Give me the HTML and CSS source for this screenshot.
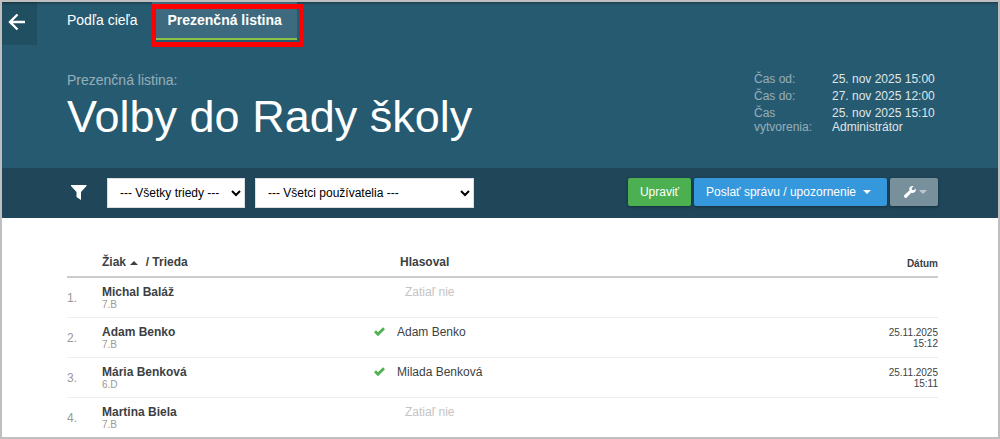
FILE: index.html
```html
<!DOCTYPE html>
<html lang="sk">
<head>
    <meta charset="utf-8">
    <meta name="viewport" content="width=device-width, initial-scale=1">
    <title>Prezenčná listina</title>
    <link rel="stylesheet" href="styles.css">
</head>
<body>
    <div class="page">
        <header class="header">
            <nav class="tabs">
                <a class="back" href="#" aria-label="Späť">
                    <svg width="18" height="18" viewBox="0 0 18 18"><path d="M9.500 1.500L2 9l7.500 7.500M2 9h15" fill="none" stroke="#fff" stroke-width="2.400"/></svg>
                </a>
                <a class="tab" href="#">Podľa cieľa</a>
                <a class="tab active" href="#">Prezenčná listina</a>
            </nav>
            <div class="heading">
                <div>
                    <p class="subtitle">Prezenčná listina:</p>
                    <h1>Volby do Rady školy</h1>
                </div>
                <dl class="info">
                    <dt>Čas od:</dt>
                    <dd>25. nov 2025 15:00</dd>
                    <dt>Čas do:</dt>
                    <dd>27. nov 2025 12:00</dd>
                    <dt>Čas vytvorenia:</dt>
                    <dd>25. nov 2025 15:10<br>Administrátor</dd>
                </dl>
            </div>
        </header>

        <div class="toolbar">
            <svg class="filter" width="18" height="16" viewBox="0 0 18 16"><path d="M0 0h15.500v1L10 7v8L5.500 12V7L0 1z" fill="#fff"/></svg>
            <select class="select-class" aria-label="Trieda">
                <option>--- Všetky triedy ---</option>
            </select>
            <select class="select-user" aria-label="Používateľ">
                <option>--- Všetci používatelia ---</option>
            </select>
            <div class="buttons">
                <button type="button" class="btn green">Upraviť</button>
                <button type="button" class="btn blue">Poslať správu / upozornenie <span class="caret"></span></button>
                <button type="button" class="btn grey" aria-label="Nástroje">
                    <svg width="12" height="12" viewBox="0 0 12 12"><path d="M11.800 2.600L9.900 4.200 8 3.700 7.700 2 9.600.3C7.600-.4 5.300.9 5.200 3.300c0 .4 0 .8.200 1.200L.5 8.900c-.7.700-.7 1.700-.1 2.400.7.800 1.700.8 2.400.1L7.200 6.800c2.700.900 5.200-1.400 4.600-4.200z" fill="#fff"/></svg>
                    <span class="caret"></span>
                </button>
            </div>
        </div>

        <main class="content">
            <table>
                <thead>
                    <tr>
                        <th class="num"></th>
                        <th class="student">Žiak <span class="sort"></span> / Trieda</th>
                        <th class="check"></th>
                        <th class="voted">Hlasoval</th>
                        <th class="date">Dátum</th>
                    </tr>
                </thead>
                <tbody>
                    <tr>
                        <td class="num">1.</td>
                        <td class="student"><b>Michal Baláž</b><small>7.B</small></td>
                        <td class="check"></td>
                        <td class="voted none">Zatiaľ nie</td>
                        <td class="date"></td>
                    </tr>
                    <tr>
                        <td class="num">2.</td>
                        <td class="student"><b>Adam Benko</b><small>7.B</small></td>
                        <td class="check"><svg width="11" height="9" viewBox="0 0 11 9"><path d="M1 4.200l3 3L10 1.200" fill="none" stroke="#4caf50" stroke-width="2.800"/></svg></td>
                        <td class="voted">Adam Benko</td>
                        <td class="date">25.11.2025<br>15:12</td>
                    </tr>
                    <tr>
                        <td class="num">3.</td>
                        <td class="student"><b>Mária Benková</b><small>6.D</small></td>
                        <td class="check"><svg width="11" height="9" viewBox="0 0 11 9"><path d="M1 4.200l3 3L10 1.200" fill="none" stroke="#4caf50" stroke-width="2.800"/></svg></td>
                        <td class="voted">Milada Benková</td>
                        <td class="date">25.11.2025<br>15:11</td>
                    </tr>
                    <tr>
                        <td class="num">4.</td>
                        <td class="student"><b>Martina Biela</b><small>7.B</small></td>
                        <td class="check"></td>
                        <td class="voted none">Zatiaľ nie</td>
                        <td class="date"></td>
                    </tr>
                </tbody>
            </table>
        </main>
    </div>
</body>
</html>
```

FILE: styles.css
```css
* {
    box-sizing: border-box;
}

body {
    margin: 0;
    font-family: "Liberation Sans", Arial, sans-serif;
    font-size: 12px;
    color: #3c3f44;
}

.page {
    min-height: 100vh;
    border: 2px solid #bfbfbf;
    background: #fff;
}

.header {
    background: #265a70;
    box-shadow: inset 0 3px 3px -2px rgba(0, 0, 0, 0.4);
    padding-bottom: 26px;
}

.tabs {
    display: flex;
    align-items: flex-start;
}

.back {
    display: flex;
    width: 35px;
    height: 43px;
    padding: 11px 0 0 6px;
    margin-right: 15px;
    background: rgba(0, 0, 0, 0.12);
}

.tab {
    position: relative;
    height: 38px;
    padding: 10px 15px 0;
    font-size: 14px;
    line-height: 16px;
    color: #fff;
    text-decoration: none;
}

.tab.active {
    font-weight: bold;
    background: #3d6a7e;
    border-bottom: 2px solid #8bc34a;
}

/* highlight frame around the current tab */
.tab.active::after {
    content: "";
    position: absolute;
    top: 2px;
    right: -7px;
    bottom: -9px;
    left: -1px;
    border: 5px solid #f00;
    border-radius: 2px;
}

.heading {
    display: flex;
    justify-content: space-between;
    align-items: flex-start;
    padding: 27px 60px 0 65px;
}

.subtitle {
    margin: 0;
    font-size: 14px;
    line-height: 16px;
    color: #fff;
    opacity: 0.5;
}

h1 {
    margin: 4px 0 0;
    font-size: 45px;
    font-weight: normal;
    line-height: 50px;
    color: #fff;
}

.info {
    display: grid;
    grid-template-columns: 78px 106px;
    row-gap: 3px;
    margin: 0;
    line-height: 14px;
    color: #fff;
}

.info dt {
    padding-right: 12px;
    opacity: 0.5;
}

.info dd {
    margin: 0;
    opacity: 0.85;
}

.toolbar {
    display: flex;
    align-items: center;
    height: 50px;
    padding: 0 60px 0 69px;
    background: #1f4659;
}

.filter {
    margin-right: 18px;
}

select {
    height: 30px;
    margin-right: 10px;
    padding: 0 0 0 8px;
    border: 1px solid #ddd;
    background: #fff;
    color: #000;
    font: inherit;
}

.select-class {
    width: 138px;
}

.select-user {
    width: 219px;
}

.buttons {
    display: flex;
    gap: 3px;
    margin: 0 0 2px auto;
}

.btn {
    display: flex;
    align-items: center;
    height: 28px;
    padding: 0 12px;
    border: 0;
    border-radius: 2px;
    box-shadow: 0 1px 3px rgba(0, 0, 0, 0.3);
    font: inherit;
    color: #fff;
}

.green {
    background: #4caf50;
}

.blue {
    padding-right: 16px;
    background: #3598dc;
}

.grey {
    padding: 0 11px 0 14px;
    background: #78909c;
}

.caret {
    margin-left: 7px;
    border: 4px solid transparent;
    border-top-color: currentColor;
    border-bottom: 0;
}

.grey .caret {
    margin-left: 3px;
    opacity: 0.5;
}

.content {
    padding: 28px 60px 0 65px;
}

table {
    width: 100%;
    border-collapse: separate;
    border-spacing: 0;
    table-layout: fixed;
}

th,
td {
    padding: 0;
    text-align: left;
    vertical-align: top;
    line-height: 14px;
}

th {
    height: 32px;
    padding-top: 9px;
    border-bottom: 2px solid #ccc;
}

td {
    height: 40px;
    padding-top: 7px;
    border-bottom: 1px solid #eee;
}

tr:last-child td {
    height: 39px;
    border-bottom: 0;
}

.num {
    width: 35px;
}

td.num {
    padding-top: 13px;
    color: #999;
}

.student {
    width: 272px;
}

.student b,
.student small {
    display: block;
}

.student small {
    font-size: 10px;
    line-height: 11px;
    color: #999;
}

.sort {
    display: inline-block;
    margin: 0 4px 1px 1px;
    border: 4px solid transparent;
    border-bottom-color: currentColor;
    border-top: 0;
}

.check {
    width: 23px;
}

td.check {
    padding-top: 9px;
}

.check svg {
    display: block;
}

th.voted {
    padding-left: 3px;
}

.none {
    padding-left: 8px;
    color: #c4c4c4;
}

.date {
    width: 60px;
    font-size: 10px;
    line-height: 11px;
    text-align: right;
}

th.date {
    padding-top: 12px;
}

td.date {
    padding-top: 9px;
}
```
